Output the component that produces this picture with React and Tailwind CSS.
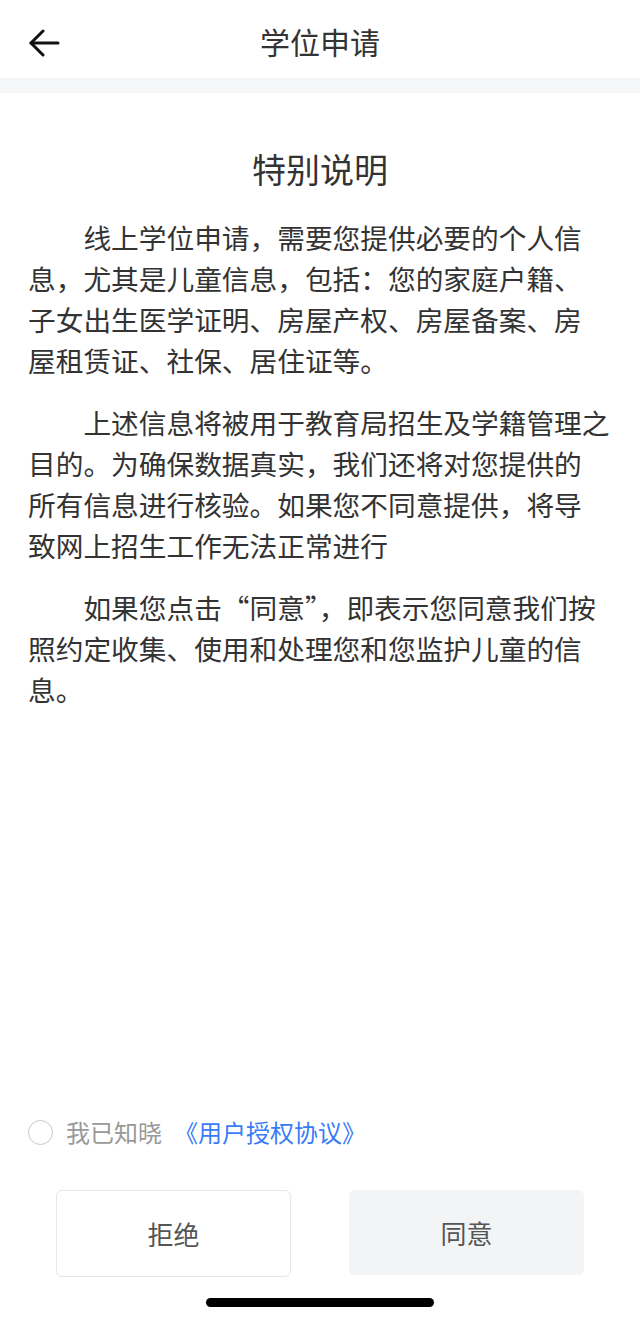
const PARAS = [
  [
    '线上学位申请，需要您提供必要的个人信',
    '息，尤其是儿童信息，包括：您的家庭户籍、',
    '子女出生医学证明、房屋产权、房屋备案、房',
    '屋租赁证、社保、居住证等。',
  ],
  [
    '上述信息将被用于教育局招生及学籍管理之',
    '目的。为确保数据真实，我们还将对您提供的',
    '所有信息进行核验。如果您不同意提供，将导',
    '致网上招生工作无法正常进行',
  ],
  [
    '如果您点击“同意”，即表示您同意我们按',
    '照约定收集、使用和处理您和您监护儿童的信',
    '息。',
  ],
]

function BackArrow() {
  return (
    <svg width="32" height="28" viewBox="0 0 32 28" fill="none" stroke="#111" strokeWidth="3" strokeLinecap="round" strokeLinejoin="round">
      <path d="M30 14H3" />
      <path d="M15 2 3 14l12 12" />
    </svg>
  )
}

export default function App() {
  return (
    <div className="flex h-[1319px] flex-col bg-white font-['Noto_Sans_CJK_SC','Noto_Sans',sans-serif] text-[#333]">
      <header className="grid h-[78px] grid-cols-[90px_1fr_90px] items-center pt-[4px]">
        <button type="button" aria-label="返回" className="flex items-center pl-[28px] pt-[4px]">
          <BackArrow />
        </button>
        <h1 className="text-center text-[30px] leading-none text-[#333]">学位申请</h1>
        <div />
      </header>
      <div className="h-[15px] bg-[#f5f6f8]" />

      <main className="px-[28px] pt-[52px]">
        <h2 className="text-center text-[34px] leading-[48px] text-[#333]">特别说明</h2>
        <div className="mt-[24px]">
          {PARAS.map((lines, i) => (
            <p key={i} className="mb-[21px] whitespace-nowrap indent-[2em] text-[27.7px] leading-[41px]">
              {lines.map((l, j) => (
                <span key={j}>
                  {l}
                  {j < lines.length - 1 && <br />}
                </span>
              ))}
            </p>
          ))}
        </div>
      </main>

      <div className="flex-1" />

      <label className="mb-[43px] flex h-[30px] items-center px-[28px] text-[24px]">
        <span className="h-[25px] w-[25px] rounded-full border-[1.5px] border-[#c8c8c8]" />
        <span className="ml-[13px] text-[#999]">我已知晓</span>
        <span className="ml-[12px] text-[#3a7cf5]">《用户授权协议》</span>
      </label>

      <div className="grid grid-cols-2 gap-[58px] px-[56px]">
        <button type="button" className="h-[87px] rounded-[6px] border border-[#e6e6e6] bg-white text-[26px] text-[#555]">
          拒绝
        </button>
        <button type="button" className="h-[85px] rounded-[6px] bg-[#f3f4f6] text-[26px] text-[#555]">
          同意
        </button>
      </div>

      <div className="flex justify-center pb-[12px] pt-[21px]">
        <div className="h-[9px] w-[228px] rounded-full bg-black" />
      </div>
    </div>
  )
}
